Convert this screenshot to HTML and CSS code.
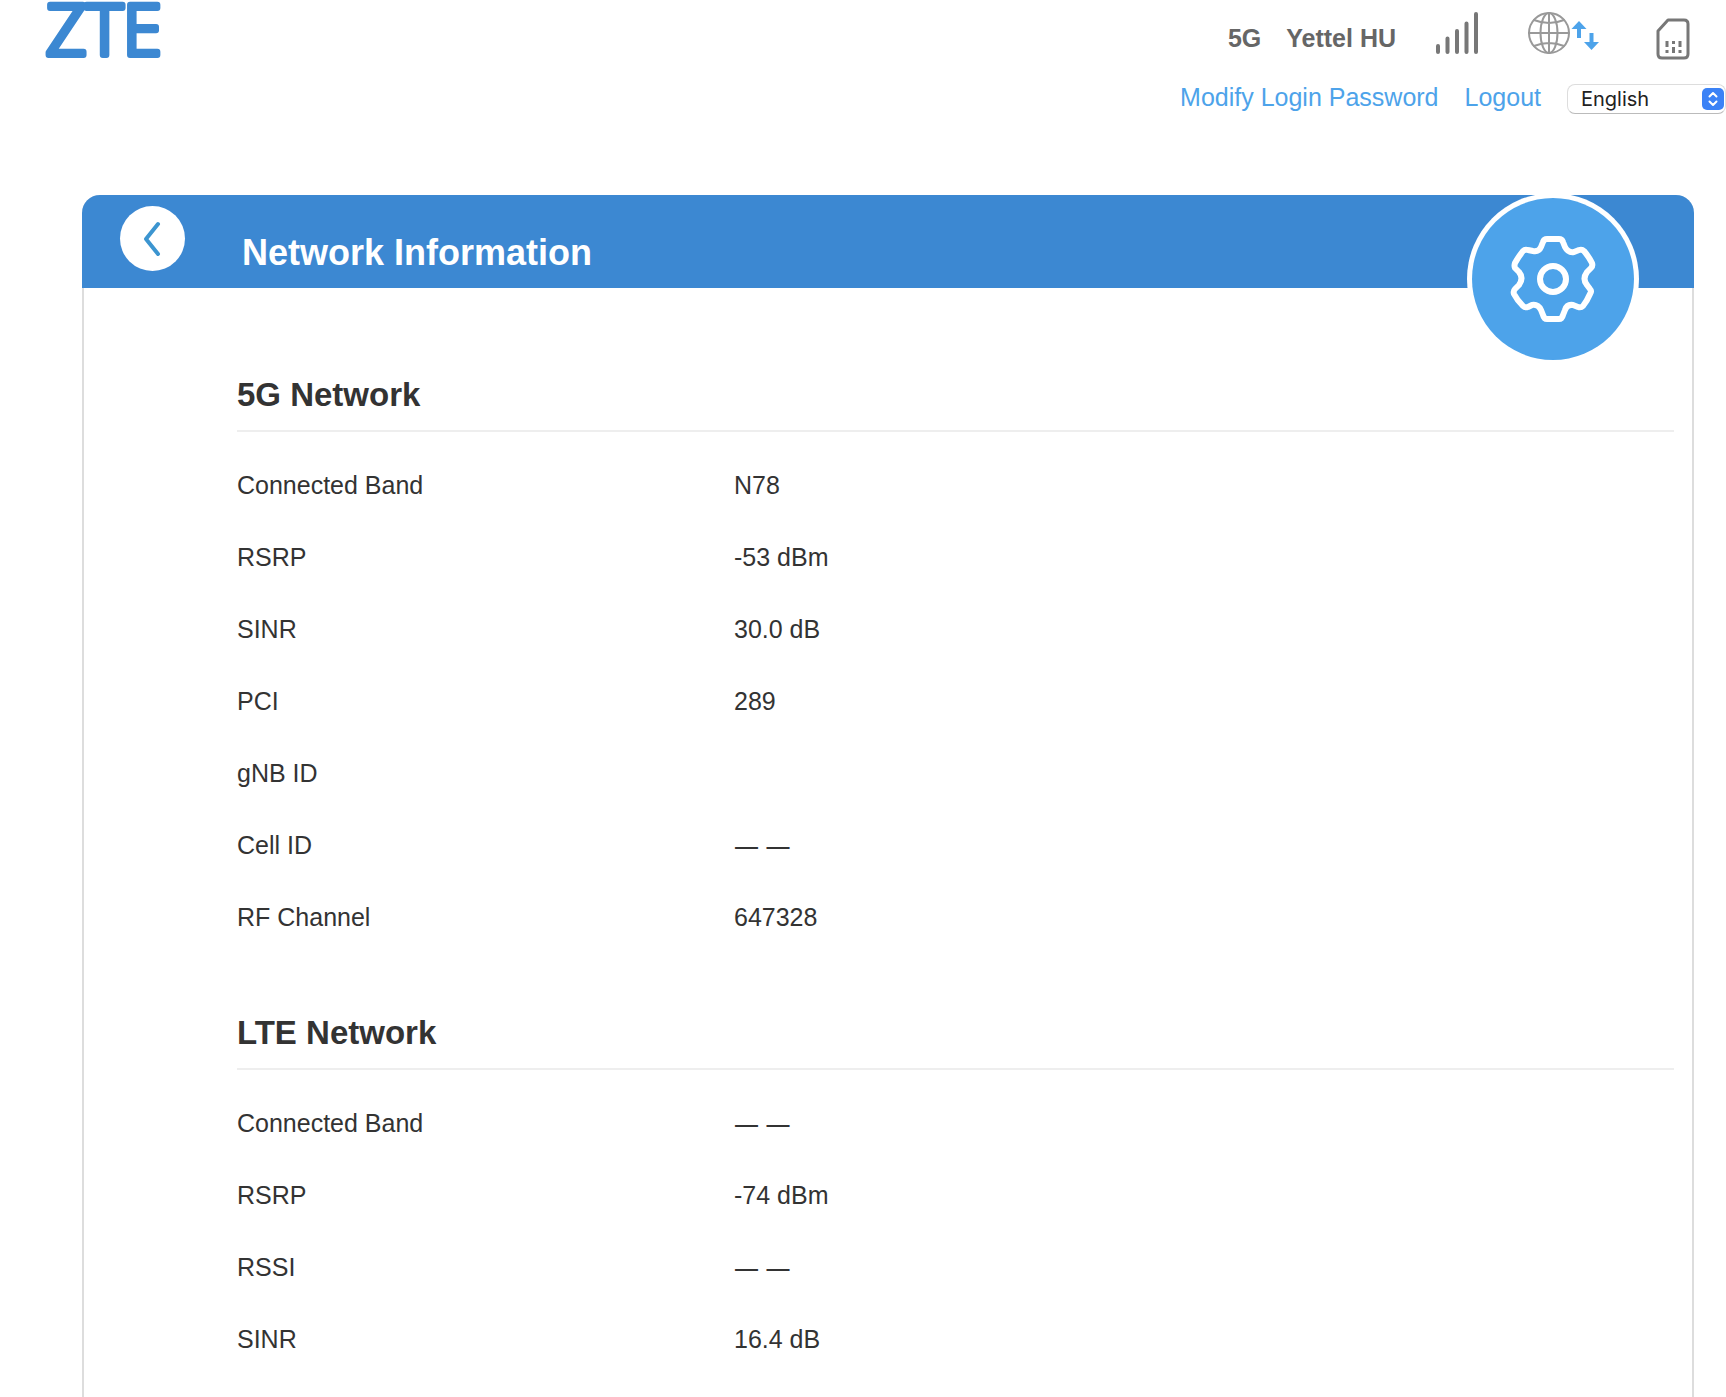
FILE: index.html
```html
<!DOCTYPE html>
<html lang="en">
  <head>
    <meta charset="utf-8" />
    <title>Network Information</title>
    <link rel="stylesheet" href="styles.css">
  </head>
  <body>
    <header class="top">
      <a class="logo" href="#">
        <svg width="150" height="68" viewBox="0 0 150 68">
          <text x="4" y="55">ZTE</text>
        </svg>
      </a>
      <div class="top-right">
        <div class="status">
          <span class="network-type">5G</span>
          <span class="operator">Yettel HU</span>
          <svg class="signal" width="44" height="44" viewBox="0 0 44 44">
            <path d="M3 35v6M12.500 27.500V41M22 20v21M31.500 12.500V41M41 3v38" />
          </svg>
          <svg class="globe" width="74" height="46" viewBox="0 0 74 46">
            <g class="globe-lines">
              <circle cx="23" cy="23" r="20" />
              <ellipse cx="23" cy="23" rx="8.500" ry="20" />
              <path d="M3 23h40M23 3v40M8 10q15 6 30 0M8 36q15-6 30 0" />
            </g>
            <path class="globe-arrows" d="M53 11l7.500 8h-5.500v9h-4v-9H45.500zM65.500 40l-7.500-8h5.500v-9h4v9h5.500z" />
          </svg>
          <svg class="sim" width="34" height="42" viewBox="0 0 34 42">
            <path class="sim-card" d="M12 2h16q4 0 4 4v30q0 4-4 4H6q-4 0-4-4V13z" />
            <path class="sim-chip" d="M11 23v6M11 32v3M17.500 23v3M17.500 29v6M24 23v6M24 32v3" />
          </svg>
        </div>
        <div class="links">
          <a href="#">Modify Login Password</a>
          <a href="#">Logout</a>
          <div class="language">
            <select id="language" aria-label="Language">
              <option>English</option>
              <option>Magyar</option>
            </select>
            <svg class="language-arrow" width="22" height="22" viewBox="0 0 22 22">
              <rect width="22" height="22" rx="5" />
              <path d="M7.500 8.500L11 5l3.500 3.500M7.500 13.500L11 17l3.500-3.500" />
            </svg>
          </div>
        </div>
      </div>
    </header>

    <main class="panel">
      <div class="panel-header">
        <button class="back" aria-label="Back">
          <svg width="20" height="38" viewBox="0 0 20 38">
            <path d="M15 4L3 19l12 15" />
          </svg>
        </button>
        <h1>Network Information</h1>
        <svg class="gear" width="172" height="172" viewBox="0 0 172 172">
          <circle class="gear-ring" cx="86" cy="86" r="86" />
          <circle class="gear-disc" cx="86" cy="86" r="81" />
          <circle class="gear-line" cx="86" cy="86" r="13" />
          <path class="gear-line" d="M80 46H92Q95 46 96 49L98 54Q101 60 107 59L112 57Q115 56 117 58Q122 64 125 70Q126 73 124 75L120 79Q115 86 120 92L123 96Q125 98 123 101Q120 108 116 113Q114 115 111 114L106 112Q100 111 98 117L96 122Q95 126 92 126H80Q77 126 76 122L74 117Q71 111 65 112L61 114Q58 115 56 113Q50 107 47 101Q46 98 48 96L52 92Q57 85 52 79L48 75Q47 73 48 70Q52 63 56 58Q58 56 61 57L66 58Q72 59 74 54L76 49Q77 46 80 46Z" />
        </svg>
      </div>

      <section>
        <h2>5G Network</h2>
        <table>
          <tr><th>Connected Band</th><td>N78</td></tr>
          <tr><th>RSRP</th><td>-53 dBm</td></tr>
          <tr><th>SINR</th><td>30.0 dB</td></tr>
          <tr><th>PCI</th><td>289</td></tr>
          <tr><th>gNB ID</th><td></td></tr>
          <tr><th>Cell ID</th><td class="empty">— —</td></tr>
          <tr><th>RF Channel</th><td>647328</td></tr>
        </table>
      </section>

      <section>
        <h2>LTE Network</h2>
        <table>
          <tr><th>Connected Band</th><td class="empty">— —</td></tr>
          <tr><th>RSRP</th><td>-74 dBm</td></tr>
          <tr><th>RSSI</th><td class="empty">— —</td></tr>
          <tr><th>SINR</th><td>16.4 dB</td></tr>
        </table>
      </section>
    </main>
  </body>
</html>
```
FILE: styles.css
```css
* {
  box-sizing: border-box;
}

body {
  display: flex;
  flex-direction: column;
  min-height: 100vh;
  margin: 0;
  background-color: #fff;
  color: #333;
  font-family: "Liberation Sans", Arial, sans-serif;
  font-size: 25px;
  line-height: 32px;
}

svg {
  display: block;
  fill: none;
  stroke-linecap: round;
  stroke-linejoin: round;
}

/* top bar */
.top {
  display: flex;
  justify-content: space-between;
  padding-left: 42px;
  margin-bottom: 77px;
}

.logo svg {
  overflow: visible;
}

.logo text {
  font-family: "Open Sans", sans-serif;
  font-size: 70px;
  font-weight: 300;
  fill: #3c88d2;
  stroke: #3c88d2;
  stroke-width: 6;
}

.top-right {
  display: flex;
  flex-direction: column;
}

.status {
  display: flex;
  align-items: center;
  justify-content: flex-end;
  height: 76px;
  padding-right: 36px;
  color: #666;
  font-weight: bold;
}

.operator {
  margin-left: 25px;
}

.signal {
  margin: 0 0 10px 39px;
  stroke: #777;
  stroke-width: 4;
}

.globe {
  margin: 0 0 10px 47px;
}

.globe-lines {
  stroke: #999;
  stroke-width: 2;
}

.globe-arrows {
  fill: #4da3ea;
}

.sim {
  margin: 2px 0 0 56px;
}

.sim-card {
  stroke: #777;
  stroke-width: 3;
}

.sim-chip {
  stroke: #777;
  stroke-width: 3;
  stroke-linecap: butt;
}

.links {
  display: flex;
  align-items: center;
  justify-content: flex-end;
  gap: 26px;
  height: 42px;
}

.links a {
  color: #4da3ea;
  text-decoration: none;
}

.language {
  position: relative;
  margin-top: 3px;
}

.language select {
  appearance: none;
  display: block;
  width: 159px;
  height: 30px;
  padding: 0 36px 0 13px;
  border: 1px solid #ddd;
  border-bottom-color: #bbb;
  border-radius: 8px;
  background-color: #fff;
  color: #222;
  font-family: Inter, sans-serif;
  font-size: 20px;
}

.language-arrow {
  position: absolute;
  top: 4px;
  right: 2px;
  pointer-events: none;
}

.language-arrow rect {
  fill: #3b82f6;
}

.language-arrow path {
  stroke: #fff;
  stroke-width: 2;
}

/* panel */
.panel {
  flex: 1;
  margin: 0 32px 0 82px;
  border: 2px solid #ddd;
  border-width: 0 2px;
  border-radius: 18px 18px 0 0;
}

.panel-header {
  position: relative;
  display: flex;
  height: 93px;
  margin: 0 -2px;
  padding: 11px 38px;
  border-radius: 18px 18px 0 0;
  background-color: #3c88d2;
}

.back {
  display: flex;
  align-items: center;
  justify-content: center;
  width: 65px;
  height: 65px;
  padding: 0;
  border: 0;
  border-radius: 50%;
  background-color: #fff;
  cursor: pointer;
}

.back path {
  stroke: #3c95d0;
  stroke-width: 4;
}

h1 {
  margin: 27px 0 0 57px;
  color: #fff;
  font-size: 36px;
  line-height: 40px;
}

/* round badge hanging over the header edge */
.gear {
  position: absolute;
  top: -2px;
  right: 55px;
}

.gear-ring {
  fill: #fff;
}

.gear-disc {
  fill: #4da3ea;
}

.gear-line {
  stroke: #fff;
  stroke-width: 6;
}

section {
  margin: 0 18px 0 153px;
  padding-top: 87px;
}

section + section {
  padding-top: 60px;
}

h2 {
  margin: 0;
  padding-bottom: 15px;
  border-bottom: 2px solid #eee;
  font-size: 33px;
  line-height: 40px;
}

table {
  width: 100%;
  margin-top: 17px;
  border-collapse: collapse;
  table-layout: fixed;
}

th,
td {
  height: 72px;
  padding: 0;
  text-align: left;
}

th {
  width: 497px;
  font-weight: normal;
}

.empty {
  font-family: "Noto Sans", sans-serif;
}
```
